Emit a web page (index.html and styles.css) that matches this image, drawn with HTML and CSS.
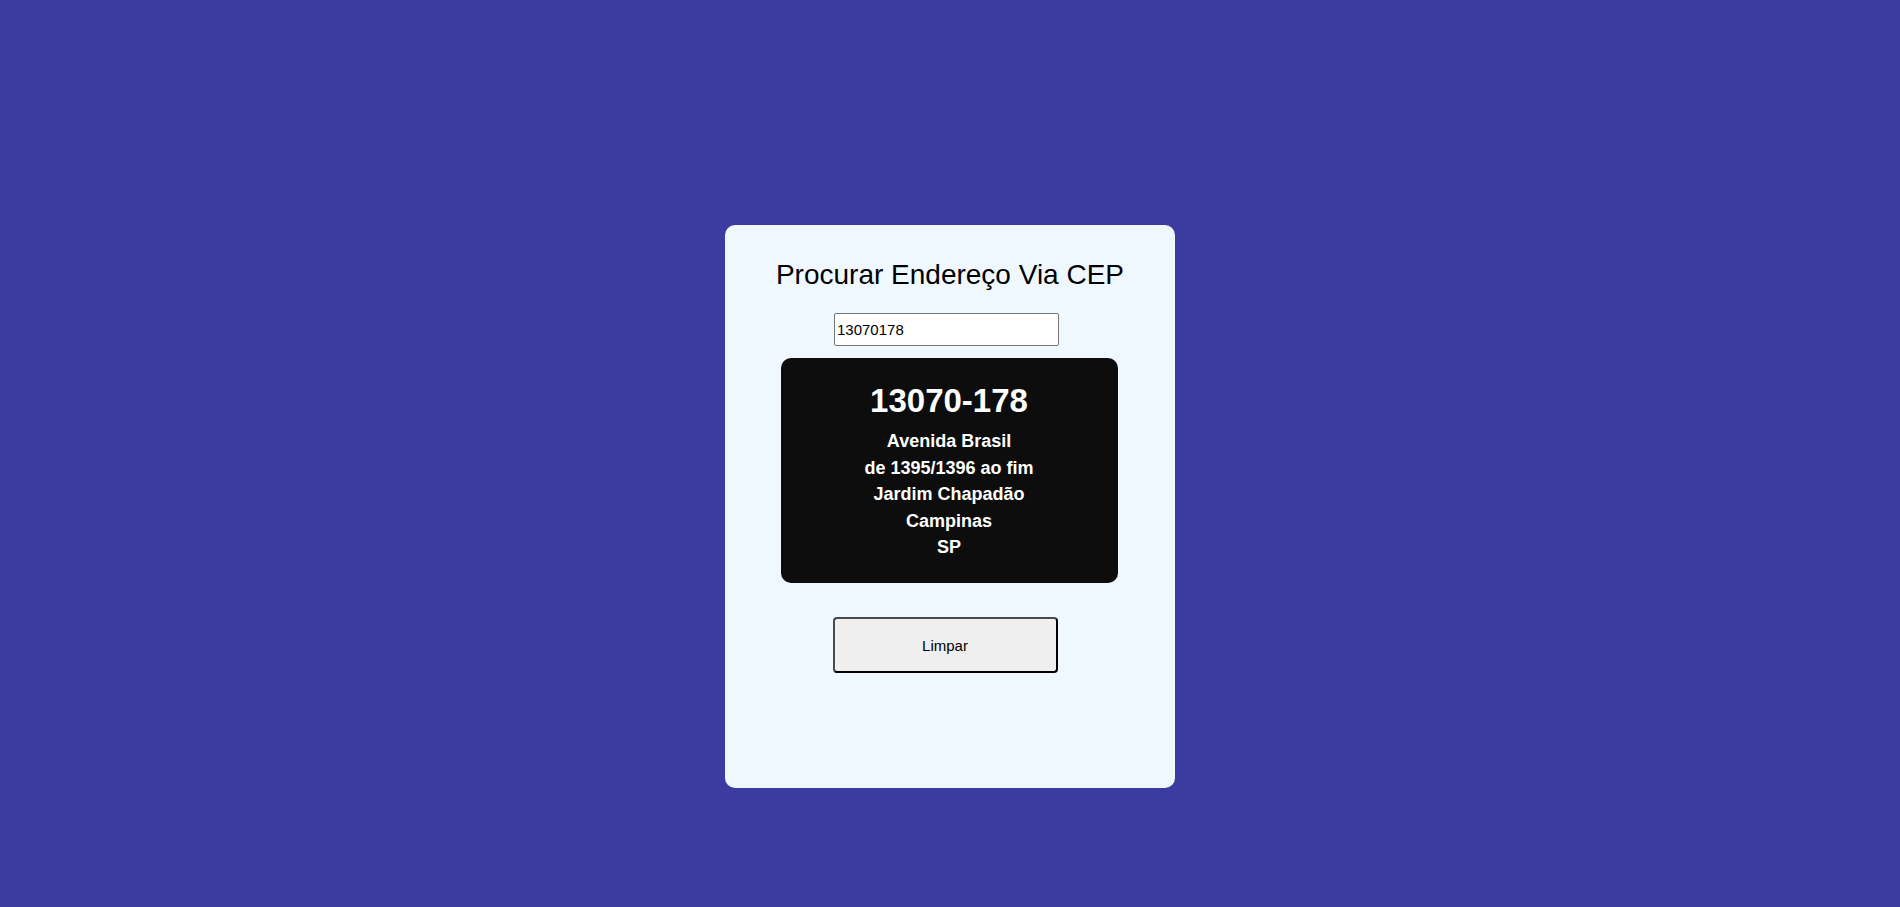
FILE: index.html
```html
<!DOCTYPE html>
<html lang="pt-BR">
<head>
<meta charset="utf-8">
<title>Procurar Endereço Via CEP</title>
<link rel="stylesheet" href="styles.css">
</head>
<body>
  <main class="card">
    <h1 class="title">Procurar Endereço Via CEP</h1>
    <input class="cep-input" type="text" value="13070178">
    <section class="result">
      <h2 class="result-cep">13070-178</h2>
      <p class="result-line">Avenida Brasil</p>
      <p class="result-line">de 1395/1396 ao fim</p>
      <p class="result-line">Jardim Chapadão</p>
      <p class="result-line">Campinas</p>
      <p class="result-line">SP</p>
    </section>
    <button class="clear-btn" type="button">Limpar</button>
  </main>
</body>
</html>
```

FILE: styles.css
```css
html, body {
  margin: 0;
  padding: 0;
}

body {
  background: #3c3ba0;
  min-height: 907px;
  font-family: "Liberation Sans", Arial, sans-serif;
  padding-top: 225px;
  box-sizing: border-box;
}

.card {
  width: 450px;
  height: 563px;
  margin: 0 auto;
  box-sizing: border-box;
  background: #f0f8ff;
  border-radius: 10px;
  padding-top: 34px;
  display: flex;
  flex-direction: column;
  align-items: center;
}

.title {
  margin: 0;
  font-size: 28px;
  font-weight: normal;
  line-height: 32px;
  color: #000;
}

.cep-input {
  margin: 22px 7px 0 0;
  width: 225px;
  height: 33px;
  box-sizing: border-box;
  border: 1px solid #767676;
  border-radius: 2px;
  padding: 0 2px;
  font-family: "Liberation Sans", Arial, sans-serif;
  font-size: 15px;
  color: #000;
  background: #fff;
}

.result {
  margin: 12px 2px 0 0;
  width: 337px;
  height: 225px;
  box-sizing: border-box;
  padding-top: 24px;
  background: #0d0d0d;
  border-radius: 10px;
  color: #fff;
  text-align: center;
}

.result-cep {
  margin: 0 0 8px;
  font-size: 33px;
  font-weight: bold;
  line-height: 38px;
}

.result-line {
  margin: 0;
  font-size: 18px;
  font-weight: bold;
  line-height: 26.5px;
}

.clear-btn {
  margin: 34px 10px 0 0;
  width: 225px;
  height: 56px;
  box-sizing: border-box;
  background: #efefef;
  border: 2px solid;
  border-color: #4a4a4a #000 #000 #4a4a4a;
  border-radius: 4px;
  font-family: "Liberation Sans", Arial, sans-serif;
  font-size: 15px;
  color: #000;
}
```
